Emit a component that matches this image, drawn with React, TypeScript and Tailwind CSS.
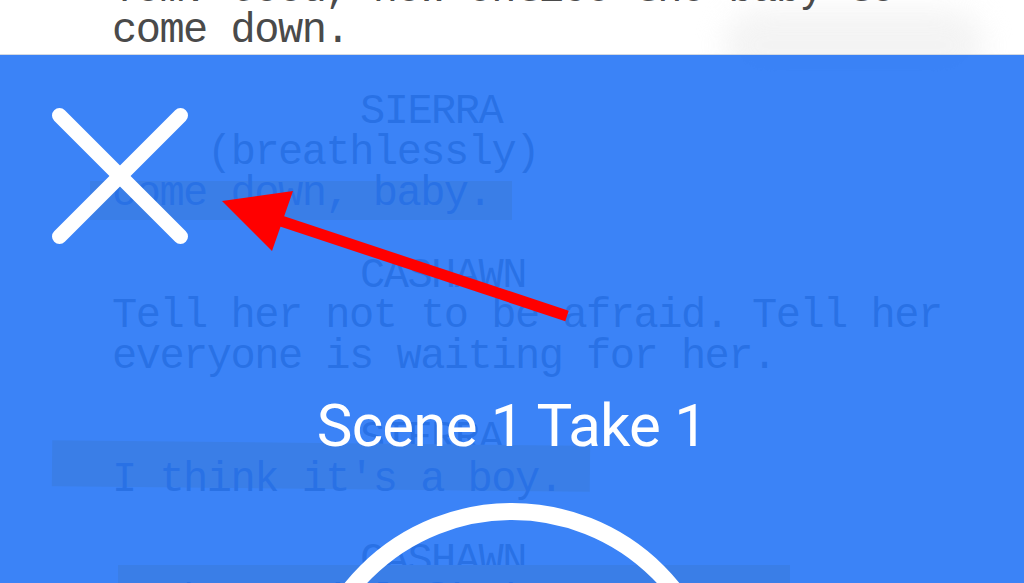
import React from "react";

type Row = { text: string; indent: string; band?: string };

const rows: Row[] = [
  { text: "Tom: Good, now entice the baby to", indent: "pl-0" },
  { text: "come down.", indent: "pl-0" },
  { text: "", indent: "pl-0" },
  { text: "SIERRA", indent: "pl-[248px]" },
  { text: "(breathlessly)", indent: "pl-[95px]" },
  {
    text: "come down, baby.",
    indent: "pl-0",
    band: "left-[-22px] top-[7px] w-[422px] h-[39px]",
  },
  { text: "", indent: "pl-0" },
  { text: "CASHAWN", indent: "pl-[248px]" },
  { text: "Tell her not to be afraid. Tell her", indent: "pl-0" },
  { text: "everyone is waiting for her.", indent: "pl-0" },
  { text: "", indent: "pl-0" },
  { text: "SIERRA", indent: "pl-[248px]" },
  {
    text: "I think it's a boy.",
    indent: "pl-0",
    band: "left-[-60px] top-[-17px] w-[538px] h-[46px] rotate-[0.6deg]",
  },
  { text: "", indent: "pl-0" },
  { text: "CASHAWN", indent: "pl-[248px]" },
  {
    text: "Maybe. We'll find out soon.",
    indent: "pl-0",
    band: "left-[6px] top-[-17px] w-[672px] h-[46px]",
  },
];

export default function App() {
  return (
    <div className="relative w-[1024px] h-[583px] overflow-hidden bg-white">
      {/* faint background smudge on the page */}
      <div className="absolute right-[40px] top-[10px] w-[260px] h-[70px] rounded-full bg-[#f1f1f1] blur-[14px] opacity-80" />

      {/* script page */}
      <div className="relative mt-[-30px] pl-[112px] font-['Liberation_Mono','Courier_New',monospace] text-[42px] leading-[40.8px] tracking-[-1.5px] text-[#4a4a4a] whitespace-pre">
        {rows.map((r, i) => (
          <div key={i} className={`relative h-[40.8px] ${r.indent}`}>
            {r.band && (
              <span className={`absolute bg-[#eecb62] ${r.band}`} />
            )}
            <span className="relative">{r.text}</span>
          </div>
        ))}
      </div>

      {/* thin edge line */}
      <div className="absolute inset-x-0 top-[54px] h-px bg-[#d3d9e2]" />

      {/* blue recording overlay */}
      <div className="absolute inset-x-0 top-[55px] bottom-0 overflow-hidden bg-[rgba(38,118,246,0.9)] flex flex-col items-center">
        <button className="self-start ml-[52px] mt-[53px] w-[136px] h-[136px] shrink-0">
          <svg width="136" height="136" viewBox="0 0 136 136">
            <line x1="7.5" y1="7.5" x2="128.5" y2="128.5" stroke="white" strokeWidth="15" strokeLinecap="round" />
            <line x1="128.5" y1="7.5" x2="7.5" y2="128.5" stroke="white" strokeWidth="15" strokeLinecap="round" />
          </svg>
        </button>
        <div className="mt-[151.5px] text-white font-['Roboto','Liberation_Sans',sans-serif] text-[60px] leading-[60px] tracking-[-0.8px] shrink-0">
          Scene 1 Take 1
        </div>
        <div className="mt-[47.5px] w-[430px] h-[430px] shrink-0 rounded-full border-[17px] border-white" />
      </div>

      {/* red annotation arrow */}
      <svg className="absolute inset-0 pointer-events-none" width="1024" height="583" viewBox="0 0 1024 583">
        <line x1="281" y1="221" x2="567" y2="316" stroke="#ff0000" strokeWidth="11" />
        <polygon points="222,201 293,191 272,251" fill="#ff0000" />
      </svg>
    </div>
  );
}
